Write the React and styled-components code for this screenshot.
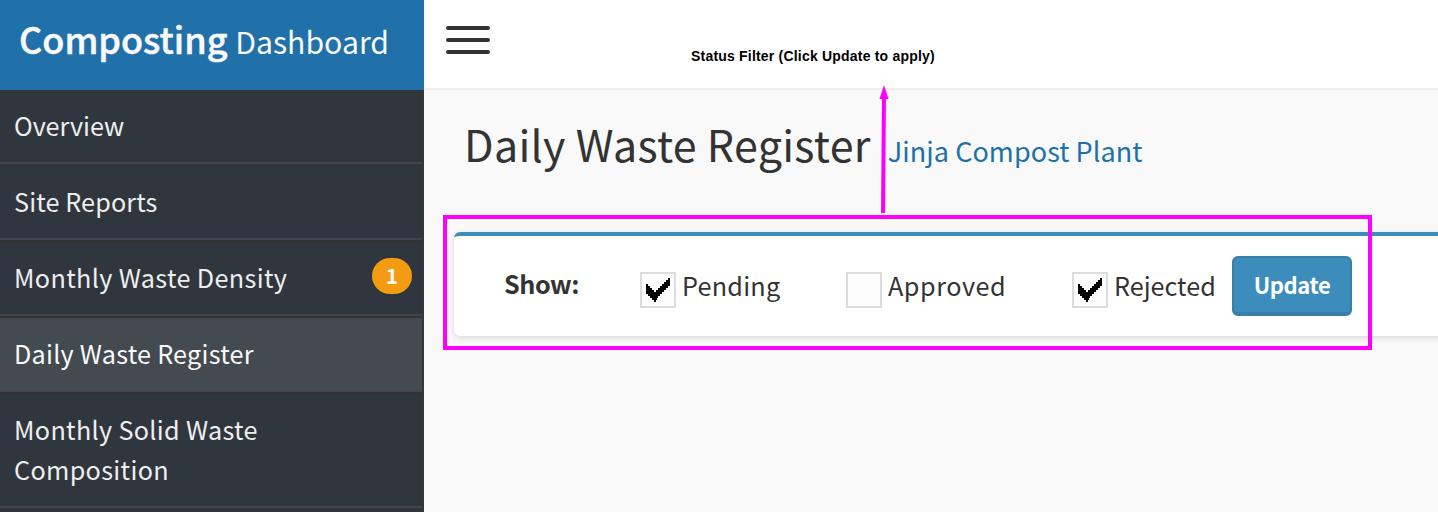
import React from "react";
import styled, { createGlobalStyle } from "styled-components";

const Global = createGlobalStyle`
  * { box-sizing: border-box; }
  body {
    margin: 0;
    width: 1438px;
    height: 512px;
    overflow: hidden;
    background: #f9f9f9;
    color: #333;
    font-family: "Noto Sans CJK SC", "Noto Sans", sans-serif;
    font-kerning: normal;
  }
`;

const Shell = styled.div`
  position: relative;
  display: flex;
  width: 1438px;
  height: 512px;
  overflow: hidden;
`;

const Sidebar = styled.aside`
  width: 424px;
  flex: none;
  height: 512px;
  overflow: hidden;
  background: #30363d;
`;

const Brand = styled.div`
  height: 90px;
  padding-left: 19px;
  background: #2070a9;
  color: #f9f9f9;
  font-size: 30.2px;
  line-height: 76px;
  white-space: nowrap;
`;

const BrandStrong = styled.span`
  margin-right: 1px;
  font-size: 36px;
  font-weight: 500;
  -webkit-text-stroke: 0.5px currentColor;
`;

const Menu = styled.ul`
  margin: 0;
  padding: 0;
  list-style: none;
  border-right: 2px solid #33383d;
`;

const MenuItem = styled.li`
  display: flex;
  justify-content: space-between;
  align-items: flex-start;
  padding: 15px 10px 17px 14px;
  border-top: 2px solid #333;
  border-bottom: 2px solid #444351;
  background: ${(p) => (p.$active ? "#434a50" : "#30363d")};
  color: ${(p) => (p.$active ? "#f9f9f9" : "#eee")};
  font-size: 25.2px;
  line-height: 40px;
  letter-spacing: ${(p) => p.$tracking}px;

  &:first-child {
    border-top: 0;
  }
`;

const MenuLabel = styled.span`
  max-width: 300px;
`;

const Badge = styled.span`
  width: 40px;
  height: 36px;
  margin-top: 1px;
  border-radius: 18px;
  background: #f39c12;
  color: #fff;
  font-size: 20px;
  font-weight: 700;
  letter-spacing: 0;
  line-height: 36px;
  text-align: center;
`;

const Main = styled.main`
  flex: 1;
  min-width: 0;
`;

const TopBar = styled.header`
  display: flex;
  align-items: flex-start;
  height: 90px;
  padding: 26px 0 0 22px;
  background: #fff;
  border-bottom: 2px solid #eee;
`;

const MenuButton = styled.div`
  display: flex;
  flex-direction: column;
  gap: 8px;
  width: 44px;
`;

const Bar = styled.span`
  height: 4px;
  border-radius: 2px;
  background: #333;
`;

const Note = styled.div`
  margin: 21px 0 0 201px;
  font: bold 14px/18px "Liberation Sans", Arial, sans-serif;
  letter-spacing: 0.2px;
  color: #000;
  white-space: nowrap;
`;

const PageTitle = styled.h1`
  margin: 0;
  padding: 19px 0 0 40px;
  height: 142px;
  font-size: 43px;
  font-weight: 400;
  line-height: 68px;
  letter-spacing: 0.3px;
  white-space: nowrap;
`;

const SiteName = styled.small`
  margin-left: 17px;
  font-size: 27px;
  letter-spacing: 0.06px;
  color: #2070a9;
`;

const Panel = styled.section`
  display: flex;
  align-items: flex-start;
  height: 104px;
  margin: 0 -20px 0 30px;
  padding: 20px 0 0 50px;
  background: #fff;
  border-top: 4px solid #3c8dbc;
  border-radius: 6px;
  box-shadow: 0 2px 6px rgba(0, 0, 0, 0.13);
  font-size: 25.2px;
  line-height: 40px;
  white-space: nowrap;
`;

const Legend = styled.span`
  width: 136px;
  margin-top: 7px;
  font-weight: 700;
  letter-spacing: -0.45px;
`;

const Option = styled.label`
  display: flex;
  gap: 6px;
  width: ${(p) => p.$width}px;
  margin-top: 9px;
  letter-spacing: ${(p) => p.$tracking}px;
`;

const Box = styled.span`
  width: 36px;
  height: 36px;
  margin-top: 7px;
  border: 2px solid #dcdcdc;
  background: #fdfdfd;

  svg {
    display: block;
  }
`;

const UpdateButton = styled.button`
  width: 120px;
  height: 60px;
  padding: 0 0 5px;
  border: 2px solid #367fa9;
  border-radius: 6px;
  background: #3c8dbc;
  box-shadow: inset 0 -2px 0 #3780ab;
  color: #fff;
  font-family: inherit;
  font-size: 22px;
  font-weight: 700;
  letter-spacing: -0.4px;
`;

const Highlight = styled.div`
  position: absolute;
  left: 443px;
  top: 215px;
  width: 929px;
  height: 135px;
  border: 4px solid #f0f;
`;

const Arrow = styled.svg`
  position: absolute;
  left: 876px;
  top: 84px;
`;

function Check() {
  return (
    <svg width="32" height="32" viewBox="0 0 32 32" shapeRendering="crispEdges">
      <path
        d="M4 10H6V12H8V14H10V16H12V18H14V16H16V14H18V12H20V10H22V8H24V6H26V4H28V12H26V14H24V16H22V18H20V20H18V22H16V24H15V26H14V28H12V26H10V24H8V22H6V20H4Z"
        fill="#000"
      />
    </svg>
  );
}

const items = [
  { label: "Overview", tracking: -0.05 },
  { label: "Site Reports", tracking: 0.12 },
  { label: "Monthly Waste Density", tracking: 0.37, count: 1 },
  { label: "Daily Waste Register", tracking: 0.25, active: true },
  { label: "Monthly Solid Waste Composition", tracking: 0.33 },
  { label: "", tracking: 0 },
];

const options = [
  { label: "Pending", checked: true, width: 206, tracking: 0.25 },
  { label: "Approved", checked: false, width: 226, tracking: 0.55 },
  { label: "Rejected", checked: true, width: 160, tracking: 0 },
];

export default function App() {
  return (
    <>
      <Global />
      <Shell>
        <Sidebar>
          <Brand>
            <BrandStrong>Composting</BrandStrong> Dashboard
          </Brand>
          <Menu>
            {items.map((item) => (
              <MenuItem
                key={item.label}
                $active={item.active}
                $tracking={item.tracking}
              >
                <MenuLabel>{item.label}</MenuLabel>
                {item.count && <Badge>{item.count}</Badge>}
              </MenuItem>
            ))}
          </Menu>
        </Sidebar>
        <Main>
          <TopBar>
            <MenuButton>
              <Bar />
              <Bar />
              <Bar />
            </MenuButton>
            <Note>Status Filter (Click Update to apply)</Note>
          </TopBar>
          <PageTitle>
            Daily Waste Register<SiteName>Jinja Compost Plant</SiteName>
          </PageTitle>
          <Panel>
            <Legend>Show:</Legend>
            {options.map((o) => (
              <Option key={o.label} $width={o.width} $tracking={o.tracking}>
                <Box>{o.checked && <Check />}</Box>
                {o.label}
              </Option>
            ))}
            <UpdateButton>Update</UpdateButton>
          </Panel>
        </Main>
        <Highlight />
        <Arrow width="16" height="130" viewBox="0 0 16 130">
          <path d="M8 10L7 129" stroke="#f0f" strokeWidth="4" />
          <path d="M8 1L12.5 15H3.5Z" fill="#f0f" />
        </Arrow>
      </Shell>
    </>
  );
}
